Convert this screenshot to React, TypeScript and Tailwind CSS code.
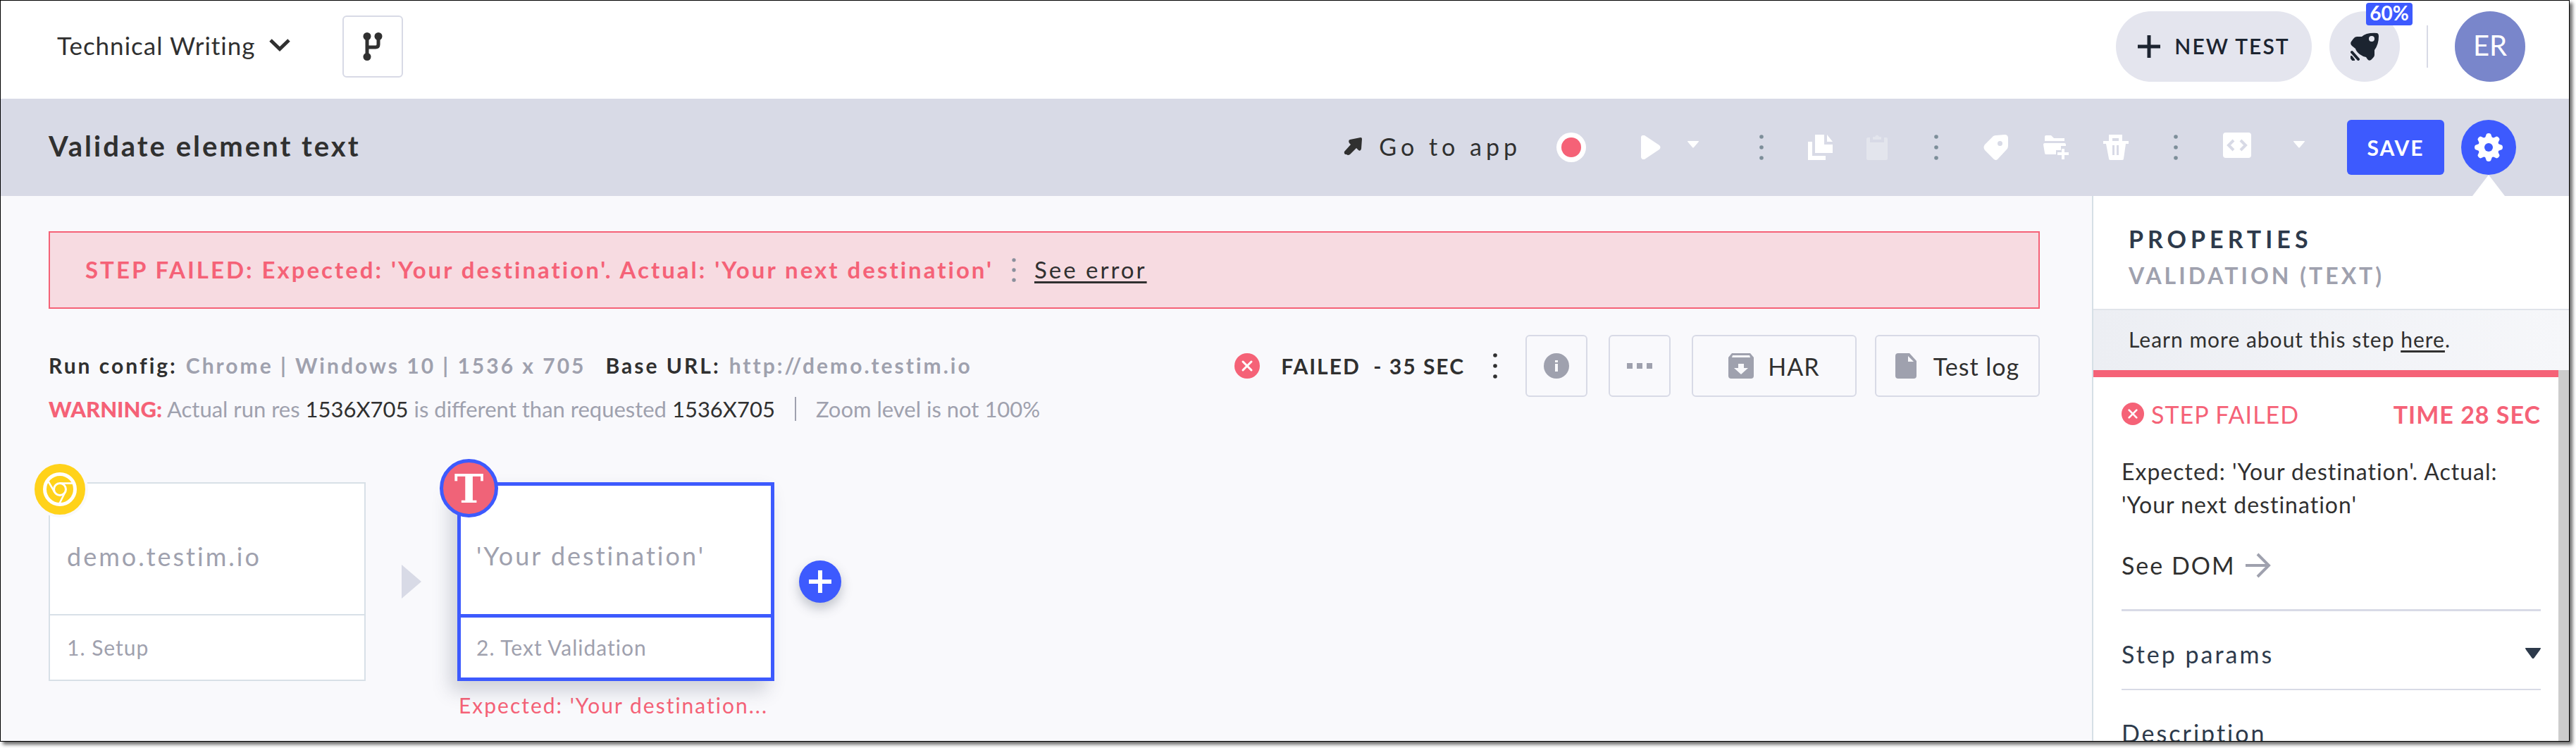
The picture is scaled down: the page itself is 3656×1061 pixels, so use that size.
import React, { useState } from 'react';

type IconProps = { className?: string };

const ChevronIcon: React.FC<IconProps> = ({ className }) => (
  <svg viewBox="0 0 30 18" fill="none" stroke="currentColor" strokeWidth="5" className={className} aria-hidden="true">
    <path d="M2 2l13 12.500L28 2" />
  </svg>
);

const BranchIcon: React.FC<IconProps> = ({ className }) => (
  <svg viewBox="0 0 28 40" fill="none" stroke="currentColor" strokeWidth="5" className={className} aria-hidden="true">
    <path d="M6 5v30M22 5v12q0 4-4 4H6" />
    <g fill="currentColor" stroke="none">
      <circle cx="6" cy="5.500" r="5.500" />
      <circle cx="22" cy="5.500" r="5.500" />
      <circle cx="6" cy="34.500" r="5.500" />
    </g>
  </svg>
);

const PlusIcon: React.FC<IconProps & { stroke?: number }> = ({ className, stroke = 5 }) => (
  <svg viewBox="0 0 32 32" fill="none" stroke="currentColor" strokeWidth={stroke} className={className} aria-hidden="true">
    <path d="M16 0v32M0 16h32" />
  </svg>
);

const RocketIcon: React.FC<IconProps> = ({ className }) => (
  <svg viewBox="0 0 40 40" fill="currentColor" className={className} aria-hidden="true">
    <path
      fillRule="evenodd"
      d="M38 1q2 1 2 4 0 12-6 20v7q0 2-2 4l-3 3q-3 2-5-1l-2-3q-5-1-9-4-5-4-6-8l-5-4Q-1 16 1 13l3-4q2-3 5-3h7Q22 0 38 1zM30 5a4 4 0 100 8 4 4 0 000-8z"
    />
    <path d="M2 28l9 10M1 35l3 4" fill="none" stroke="currentColor" strokeWidth="4" strokeLinecap="round" />
  </svg>
);

const ArrowUpRightIcon: React.FC<IconProps> = ({ className }) => (
  <svg viewBox="0 0 26 26" fill="currentColor" className={className} aria-hidden="true">
    <path d="M24 1q2 0 2 2l-1 14q-1 4-4 2l-3-3-9 9q-3 2-5 0-4 0-3-4l9-10-2-2q-2-4 1-5z" />
  </svg>
);

const PlayIcon: React.FC<IconProps> = ({ className }) => (
  <svg viewBox="0 0 28 34" fill="currentColor" className={className} aria-hidden="true">
    <path d="M0 3q0-4 5-3l21 14q3 3 0 6L5 34q-4 1-5-3z" />
  </svg>
);

const CaretIcon: React.FC<IconProps> = ({ className }) => (
  <svg viewBox="0 0 16 10" preserveAspectRatio="none" fill="currentColor" className={className} aria-hidden="true">
    <path d="M0 0h16q0 1-1 2L9 9q-1 1-2 0L1 2Q0 1 0 0z" />
  </svg>
);

const DotsIcon: React.FC<IconProps> = ({ className }) => (
  <svg viewBox="0 0 6 36" fill="currentColor" className={className} aria-hidden="true">
    <circle cx="3" cy="3" r="2.800" />
    <circle cx="3" cy="18" r="2.800" />
    <circle cx="3" cy="33" r="2.800" />
  </svg>
);

const CopyIcon: React.FC<IconProps> = ({ className }) => (
  <svg viewBox="0 0 36 36" fill="currentColor" className={className} aria-hidden="true">
    <path d="M10 0h13v14h12v12H10zM27 0l8 10h-8zM0 10h6v20h19v6H0z" />
  </svg>
);

const ClipboardIcon: React.FC<IconProps> = ({ className }) => (
  <svg viewBox="0 0 36 36" fill="currentColor" className={className} aria-hidden="true">
    <path d="M5 4h3v7h20V4h3q2 0 2 2v28q0 2-2 2H5q-2 0-2-2V6q0-2 2-2z" />
    <path d="M12 7V3h3q3-5 6 0h3v4z" />
  </svg>
);

const TagIcon: React.FC<IconProps> = ({ className }) => (
  <svg viewBox="0 0 36 36" fill="currentColor" className={className} aria-hidden="true">
    <path
      fillRule="evenodd"
      d="M18 1l12-1q5 0 5 5v11q0 3-2 5L20 35q-2 2-5 0L2 22q-3-4 0-8L14 2q2-1 4-1zM23.500 9a3.500 3.500 0 100 7 3.500 3.500 0 000-7z"
    />
  </svg>
);

const FolderPlusIcon: React.FC<IconProps> = ({ className }) => (
  <svg viewBox="0 0 36 36" fill="currentColor" className={className} aria-hidden="true">
    <path d="M2 3q0-2 2-2h7l4 4h15v4H2zM2 12h28q2 0 2 2v2h-7v6h-7v6H4q-2 0-2-2L0 14q0-2 2-2z" />
    <path d="M26 20h4v5h6v4h-6v6h-4v-6h-6v-4h6z" />
  </svg>
);

const TrashIcon: React.FC<IconProps> = ({ className }) => (
  <svg viewBox="0 0 36 36" fill="currentColor" className={className} aria-hidden="true">
    <path fillRule="evenodd" d="M8 0h19v9h9v4h-4l-3 21q0 2-2 2H10q-2 0-2-2L4 13H0V9h8zM13 5v4h9V5zM13 15v14h3V15zM19 15v14h3V15z" />
  </svg>
);

const CodeIcon: React.FC<IconProps> = ({ className }) => (
  <svg viewBox="0 0 40 36" className={className} aria-hidden="true">
    <rect width="40" height="36" rx="4" fill="currentColor" />
    <path d="M15 11l-7 7 7 7M25 11l7 7-7 7" fill="none" stroke="#d8dae6" strokeWidth="4" />
  </svg>
);

const GearIcon: React.FC<IconProps> = ({ className }) => (
  <svg viewBox="0 0 40 40" fill="currentColor" className={className} aria-hidden="true">
    {[0, 45, 90, 135].map((angle) => (
      <path key={angle} d="M17 1q3-2 6 0l3 8v22l-3 8q-3 2-6 0l-3-8V9z" transform={`rotate(${angle} 20 20)`} />
    ))}
    <circle cx="20" cy="20" r="15" />
    <circle cx="20" cy="20" r="6" fill="#3d5afe" />
  </svg>
);

const FailIcon: React.FC<IconProps> = ({ className }) => (
  <svg viewBox="0 0 36 36" className={className} aria-hidden="true">
    <circle cx="18" cy="18" r="18" fill="#f56277" />
    <path d="M12 12l12 12M24 12L12 24" stroke="#fff" strokeWidth="3" strokeLinecap="round" />
  </svg>
);

const InfoIcon: React.FC<IconProps> = ({ className }) => (
  <svg viewBox="0 0 36 36" className={className} aria-hidden="true">
    <circle cx="18" cy="18" r="18" fill="currentColor" />
    <path d="M18 15v11M18 10v3" stroke="#f9f9fc" strokeWidth="4" />
  </svg>
);

const MoreIcon: React.FC<IconProps> = ({ className }) => (
  <svg viewBox="0 0 36 8" fill="currentColor" className={className} aria-hidden="true">
    <path d="M0 0h8v8H0zM14 0h8v8h-8zM28 0h8v8h-8z" />
  </svg>
);

const ArchiveIcon: React.FC<IconProps> = ({ className }) => (
  <svg viewBox="0 0 36 36" className={className} aria-hidden="true">
    <path d="M5 0h26l5 6v26q0 4-4 4H4q-4 0-4-4V6z" fill="currentColor" />
    <path d="M6 3h24l1 3H5zM14 15h8v6h6L18 30 8 21h6z" fill="#f9f9fc" />
  </svg>
);

const FileIcon: React.FC<IconProps> = ({ className }) => (
  <svg viewBox="0 0 30 36" className={className} aria-hidden="true">
    <path d="M4 0h16l10 11v21q0 4-4 4H4q-4 0-4-4V4q0-4 4-4z" fill="currentColor" />
    <path d="M18 4l8 8h-8z" fill="#f9f9fc" />
  </svg>
);

const ArrowRightIcon: React.FC<IconProps> = ({ className }) => (
  <svg viewBox="0 0 36 36" fill="none" stroke="currentColor" strokeWidth="4" className={className} aria-hidden="true">
    <path d="M0 18h33M17 2l16 16-16 16" />
  </svg>
);

const ChromeIcon: React.FC<IconProps> = ({ className }) => (
  <svg viewBox="0 0 48 48" fill="none" stroke="currentColor" className={className} aria-hidden="true">
    <circle cx="24" cy="24" r="21.500" strokeWidth="5" />
    <circle cx="24" cy="24" r="8.500" strokeWidth="3" />
    <path d="M24 15.500h19M16.500 28L7 12M31.500 28L23 45" strokeWidth="2.500" />
  </svg>
);

const editActions = [
  { label: 'Add label', Icon: TagIcon },
  { label: 'Add to group', Icon: FolderPlusIcon },
  { label: 'Delete', Icon: TrashIcon },
];

const TopBar: React.FC = () => (
  <header className="flex h-[139px] shrink-0 items-center bg-white pb-2.5 pl-20 pr-[62px]">
    <button className="flex items-center gap-5 pb-1 text-[35px] leading-10 tracking-[1px]">
      Technical Writing
      <ChevronIcon className="h-[18px] w-[30px]" />
    </button>
    <button aria-label="Branches" className="ml-[74px] flex h-[88px] w-[86px] items-center justify-center rounded-md border-2 border-[#d8dae6]">
      <BranchIcon className="h-10 w-7" />
    </button>

    <div className="ml-auto flex items-center">
      <button className="flex h-[100px] w-[278px] items-center justify-center gap-5 rounded-full bg-[#e4e5ee] text-[30px] font-semibold tracking-[2px] text-[#1c2430]">
        <PlusIcon className="h-8 w-8" />
        NEW TEST
      </button>
      <button aria-label="Getting started" className="relative ml-[25px] flex h-[100px] w-[100px] items-center justify-center rounded-full bg-[#e4e5ee] text-[#1c2430]">
        <RocketIcon className="h-10 w-10" />
        <span className="absolute -top-3 left-[52px] flex h-8 w-[66px] items-center justify-center rounded bg-[#3d5afe] pb-1 text-[28px] font-bold leading-7 text-white">
          60%
        </span>
      </button>
      <div className="mx-[38px] h-[60px] w-0.5 bg-[#d8dae6]" />
      <button className="flex h-[100px] w-[100px] items-center justify-center rounded-full bg-[#7986cb] pb-1 text-[40px] text-white">ER</button>
    </div>
  </header>
);

const Toolbar: React.FC = () => (
  <div className="flex h-[138px] shrink-0 items-center bg-[#d8dae6] pl-[68px] pr-[75px]">
    <h1 className="pb-1 text-[40px] font-bold tracking-[3px]">Validate element text</h1>

    <div className="ml-auto flex items-center text-white">
      <a href="#app" className="flex items-center gap-6 pb-1 text-[34px] tracking-[6px] text-[#303030]">
        <ArrowUpRightIcon className="h-[26px] w-[26px]" />
        Go to app
      </a>
      <button aria-label="Record" className="ml-[50px] flex h-[42px] w-[42px] items-center justify-center rounded-full bg-white">
        <span className="h-7 w-7 rounded-full bg-[#f56277]" />
      </button>
      <button aria-label="Run" className="ml-[78px]">
        <PlayIcon className="h-[34px] w-7" />
      </button>
      <button aria-label="Run options" className="ml-[38px] mr-[86px] pb-2">
        <CaretIcon className="h-2.5 w-4" />
      </button>
      <DotsIcon className="h-9 w-1.5 text-[#7d8e99]" />
      <div className="mx-[63px] flex gap-11">
        <button aria-label="Copy">
          <CopyIcon className="h-9 w-9" />
        </button>
        <button aria-label="Paste" disabled className="opacity-30">
          <ClipboardIcon className="h-9 w-9" />
        </button>
      </div>
      <DotsIcon className="h-9 w-1.5 text-[#7d8e99]" />
      <div className="mx-16 flex gap-[49px]">
        {editActions.map(({ label, Icon }) => (
          <button key={label} aria-label={label}>
            <Icon className="h-9 w-9" />
          </button>
        ))}
      </div>
      <DotsIcon className="h-9 w-1.5 text-[#7d8e99]" />
      <div className="ml-16 flex items-center gap-[60px]">
        <button aria-label="Export code" className="pb-1.5">
          <CodeIcon className="h-9 w-10" />
        </button>
        <button aria-label="Export options" className="pb-2">
          <CaretIcon className="h-2.5 w-4" />
        </button>
        <button className="h-[78px] w-[138px] rounded-md bg-[#3d5afe] text-[30px] font-bold tracking-[2px] text-white">SAVE</button>
      </div>
      <div className="relative ml-6 flex">
        <button aria-label="Settings" className="flex h-[78px] w-[78px] items-center justify-center rounded-full bg-[#3d5afe]">
          <GearIcon className="h-10 w-10" />
        </button>
        <svg viewBox="0 0 46 30" className="absolute left-4 top-[78px] h-[30px] w-[46px]" aria-hidden="true">
          <path d="M23 0l23 30H0z" fill="#fff" />
        </svg>
      </div>
    </div>
  </div>
);

const RunSummary: React.FC = () => (
  <div className="mt-[37px] flex items-start justify-between">
    <div className="pt-3 leading-[62px] text-[#9fa1ae]">
      <p className="flex gap-3 text-[30px] font-bold tracking-[3px]">
        <span className="text-[#303030]">Run config:</span>
        <span>Chrome | Windows 10 | 1536 x 705</span>
        <span className="ml-4 text-[#303030]">Base URL:</span>
        <span>http://demo.testim.io</span>
      </p>
      <p className="flex items-center text-[31px]">
        <span>
          <b className="font-black text-[#f56277]">WARNING:</b> Actual run res <span className="text-[#303030]">1536X705</span> is different than
          requested <span className="text-[#303030]">1536X705</span>
        </span>
        <span className="mx-7 h-[34px] w-0.5 bg-[#9fa1ae]" />
        <span>Zoom level is not 100%</span>
      </p>
    </div>

    <div className="flex items-center text-[#9fa1ae]">
      <FailIcon className="h-9 w-9" />
      <span className="ml-[30px] text-[30px] font-bold tracking-[2px] text-[#303030]">FAILED&nbsp; - 35 SEC</span>
      <DotsIcon className="mx-10 h-9 w-1.5 text-[#303030]" />
      <button aria-label="Run info" className="flex h-[88px] w-[88px] items-center justify-center rounded-md border-2 border-[#d8dae6]">
        <InfoIcon className="h-9 w-9" />
      </button>
      <button aria-label="More" className="ml-[30px] flex h-[88px] w-[88px] items-center justify-center rounded-md border-2 border-[#d8dae6]">
        <MoreIcon className="h-2 w-9" />
      </button>
      <button className="ml-[30px] flex h-[88px] w-[234px] items-center justify-center gap-5 rounded-md border-2 border-[#d8dae6] text-[34px] tracking-[1px]">
        <ArchiveIcon className="h-9 w-9" />
        <span className="text-[#303030]">HAR</span>
      </button>
      <button className="ml-[26px] flex h-[88px] w-[234px] items-center justify-center gap-6 rounded-md border-2 border-[#d8dae6] text-[34px] tracking-[1px]">
        <FileIcon className="h-9 w-[30px]" />
        <span className="text-[#303030]">Test log</span>
      </button>
    </div>
  </div>
);

const StepFlow: React.FC = () => (
  <section className="mt-[73px] flex items-start text-[#9fa1ae]">
    <article className="relative flex h-[282px] w-[450px] flex-col border-2 border-[#d8e0e7] bg-white">
      <div className="absolute -left-[26px] -top-8 flex h-20 w-20 items-center justify-center rounded-full border-4 border-[#f9f9fc] bg-[#ffd21a] text-white">
        <ChromeIcon className="h-12 w-12" />
      </div>
      <h2 className="flex flex-1 items-center px-6 pt-5 text-[36px] tracking-[3px]">demo.testim.io</h2>
      <p className="flex h-[93px] items-center border-t-2 border-[#d8e0e7] px-6 text-[30px] tracking-[1px]">1. Setup</p>
    </article>

    <div className="flex h-[282px] items-center px-[51px]">
      <svg viewBox="0 0 28 48" className="h-12 w-7" aria-hidden="true">
        <path d="M0 0l28 24L0 48z" fill="#d8dae6" />
      </svg>
    </div>

    <div className="w-[450px]">
      <article className="relative flex h-[282px] flex-col border-[5px] border-[#3d5afe] bg-white shadow-[-10px_14px_24px_rgba(60,70,90,0.22)]">
        <div className="absolute -left-[30px] -top-[38px] flex h-[83px] w-[83px] items-center justify-center rounded-full border-[5px] border-[#3d5afe] bg-[#f06378] font-['DejaVu_Serif',serif] text-[56px] font-bold leading-none text-white">
          T
        </div>
        <h2 className="flex flex-1 items-center px-[22px] pt-4 text-[36px] tracking-[3px]">'Your destination'</h2>
        <p className="flex h-[90px] items-center border-t-[5px] border-[#3d5afe] px-[22px] text-[30px] tracking-[1px]">2. Text Validation</p>
      </article>
      <p className="mt-3.5 whitespace-nowrap pl-0.5 text-[30px] leading-10 tracking-[2px] text-[#f56277]">Expected: 'Your destination...</p>
    </div>

    <div className="flex h-[282px] items-center pl-[35px]">
      <button aria-label="Add step" className="flex h-[60px] w-[60px] items-center justify-center rounded-full bg-[#3d5afe] text-white shadow-[0_8px_16px_rgba(60,70,90,0.3)]">
        <PlusIcon stroke={6} className="h-8 w-8" />
      </button>
    </div>
  </section>
);

const PropertiesPanel: React.FC = () => {
  const [paramsOpen, setParamsOpen] = useState(false);

  return (
    <aside className="flex w-[677px] shrink-0 flex-col border-l-2 border-[#d6dfe6] bg-white">
      <div className="h-[162px] shrink-0 border-b-2 border-[#e0e4ea] pl-[50px] pt-[35px] leading-[52px]">
        <h2 className="text-[34px] font-bold tracking-[6px] text-[#2d3a4b]">PROPERTIES</h2>
        <h3 className="text-[32px] font-bold tracking-[4px] text-[#9fa1ae]">VALIDATION (TEXT)</h3>
      </div>
      <p className="h-[85px] shrink-0 bg-linear-to-r from-[#eceef3] to-[#f6f7fa] pl-[50px] text-[30px] leading-[83px] tracking-[1px]">
        Learn more about this step{' '}
        <a href="#docs" className="underline decoration-[3px] underline-offset-4">
          here
        </a>
        .
      </p>

      <div className="flex min-h-0 flex-1">
        <div className="flex-1 overflow-hidden border-t-[10px] border-[#f56277]">
          <div className="pl-10 pr-[25px]">
            <div className="flex h-[104px] items-center text-[34px] tracking-[1px] text-[#f56277]">
              <FailIcon className="h-8 w-8" />
              <span className="ml-2.5">STEP FAILED</span>
              <span className="ml-auto font-bold">TIME 28 SEC</span>
            </div>
            <p className="pt-1.5 text-[32px] leading-[47px] tracking-[1px]">Expected: 'Your destination'. Actual: 'Your next destination'</p>
            <a href="#dom" className="flex h-[125px] items-center gap-3.5 text-[34px] tracking-[2px]">
              See DOM
              <ArrowRightIcon className="h-9 w-9 text-[#9fa1ae]" />
            </a>
            <button
              onClick={() => setParamsOpen(!paramsOpen)}
              aria-expanded={paramsOpen}
              className="flex h-[115px] w-full items-center justify-between border-y-2 border-t-[3px] border-[#d8dae6] pt-2.5 text-[34px] tracking-[3px] text-[#2d3a4b]"
            >
              Step params
              <CaretIcon className="h-4 w-[22px]" />
            </button>
            <h4 className="flex h-[110px] items-center pt-2.5 text-[34px] tracking-[3px] text-[#2d3a4b]">Description</h4>
          </div>
        </div>
        <div className="w-[15px] bg-[#cccccc]" />
      </div>
    </aside>
  );
};

const App: React.FC = () => (
  <div className="h-screen overflow-hidden bg-white pb-[9px] pr-[9px] font-[Lato,sans-serif] text-[#303030]">
    <div className="flex h-full flex-col overflow-hidden border border-black shadow-[4px_4px_5px_rgba(0,0,0,0.6)]">
      <TopBar />
      <Toolbar />
      <div className="flex min-h-0 flex-1">
        <main className="min-w-0 flex-1 overflow-hidden bg-[#f9f9fc] pl-[68px] pr-[74px] pt-[50px]">
          <div className="flex h-[110px] items-center border-2 border-[#f56277] bg-[#f7dbe1] pl-[50px] text-[33px] tracking-[3px]">
            <strong className="font-bold text-[#f56277]">STEP FAILED: Expected: 'Your destination'. Actual: 'Your next destination'</strong>
            <DotsIcon className="mx-[26px] h-[34px] w-1.5 text-[#8b909c]" />
            <a href="#error" className="underline decoration-[3px] underline-offset-4">
              See error
            </a>
          </div>
          <RunSummary />
          <StepFlow />
        </main>
        <PropertiesPanel />
      </div>
    </div>
  </div>
);

export default App;
